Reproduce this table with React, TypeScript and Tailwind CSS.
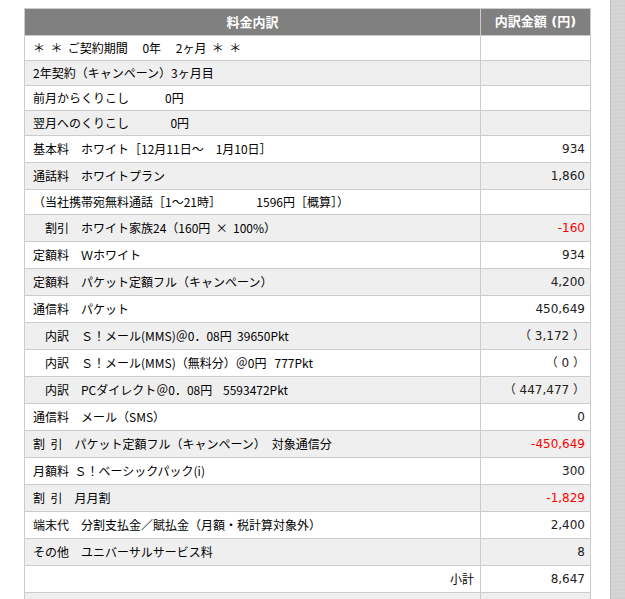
type Row = {
  label: string
  amount?: string
  red?: boolean
  tall?: boolean
  right?: boolean
}

const rows: Row[] = [
  { label: '＊  ＊  ご契約期間　 0年　 2ヶ月  ＊  ＊' },
  { label: '2年契約（キャンペーン）3ヶ月目' },
  { label: '前月からくりこし　　　0円' },
  { label: '翌月へのくりこし　　　  0円' },
  { label: '基本料　ホワイト［12月11日～　1月10日］', amount: '934', tall: true },
  { label: '通話料　ホワイトプラン', amount: '1,860', tall: true },
  { label: '（当社携帯宛無料通話［1～21時］　　　  1596円［概算］）' },
  { label: '　割引　ホワイト家族24（160円  ×  100%）', amount: '-160', red: true, tall: true },
  { label: '定額料　Ｗホワイト', amount: '934', tall: true },
  { label: '定額料　パケット定額フル（キャンペーン）', amount: '4,200', tall: true },
  { label: '通信料　パケット', amount: '450,649', tall: true },
  { label: '　内訳　Ｓ！メール(MMS)＠0．08円  39650Pkt', amount: '（ 3,172 ）', tall: true },
  { label: '　内訳　Ｓ！メール(MMS)（無料分）＠0円   777Pkt', amount: '（ 0 ）', tall: true },
  { label: '　内訳　PCダイレクト＠0．08円    5593472Pkt', amount: '（ 447,477 ）', tall: true },
  { label: '通信料　メール（SMS）', amount: '0', tall: true },
  { label: '割  引　パケット定額フル（キャンペーン）　対象通信分', amount: '-450,649', red: true, tall: true },
  { label: '月額料  Ｓ！ベーシックパック(i)', amount: '300', tall: true },
  { label: '割  引　月月割', amount: '-1,829', red: true, tall: true },
  { label: '端末代　分割支払金／賦払金（月額・税計算対象外）', amount: '2,400', tall: true },
  { label: 'その他　ユニバーサルサービス料', amount: '8', tall: true },
  { label: '小計', amount: '8,647', tall: true, right: true },
  { label: '', tall: true },
]

const jp = "font-['MS_PGothic','Noto_Sans_CJK_JP',sans-serif]"
const num = "font-['DejaVu_Sans','Noto_Sans_CJK_JP',sans-serif]"

export default function App() {
  return (
    <div className="flex h-[599px] w-[625px] overflow-hidden bg-white">
      <div className="w-[610px] pl-[24px] pt-[8px]">
        <div className="w-[567px] border-x border-t border-[#cccccc]">
          <div className="flex h-[27px] border-b border-[#cccccc] bg-[#808080] text-[13px] font-bold text-white">
            <div className={`flex w-[456px] items-center justify-center border-r border-[#cccccc] ${jp}`}>
              料金内訳
            </div>
            <div className={`flex flex-1 items-center justify-center ${num}`}>
              内訳金額 (円)
            </div>
          </div>
          {rows.map((r, i) => (
            <div
              key={i}
              className={`flex border-b border-[#cccccc] ${r.tall ? 'h-[27px]' : 'h-[25px]'} ${
                i % 2 === 0 ? 'bg-white' : 'bg-[#efefef]'
              }`}
            >
              <div
                className={`flex w-[456px] items-center whitespace-pre border-r border-[#cccccc] text-[12px] text-black ${jp} ${
                  r.right ? 'justify-end pr-[6px]' : 'pl-[8px]'
                }`}
              >
                {r.label}
              </div>
              <div
                className={`flex flex-1 items-center justify-end whitespace-pre pr-[5px] text-[12px] ${num} ${
                  r.red ? 'text-[#ff0000]' : 'text-[#222222]'
                }`}
              >
                {r.amount}
              </div>
            </div>
          ))}
        </div>
      </div>
      <div className="w-[15px] border-l border-[#bdbdbd] bg-[repeating-linear-gradient(180deg,#d6d6d6_0px,#cfcfcf_2px,#dadada_4px)]" />
    </div>
  )
}
